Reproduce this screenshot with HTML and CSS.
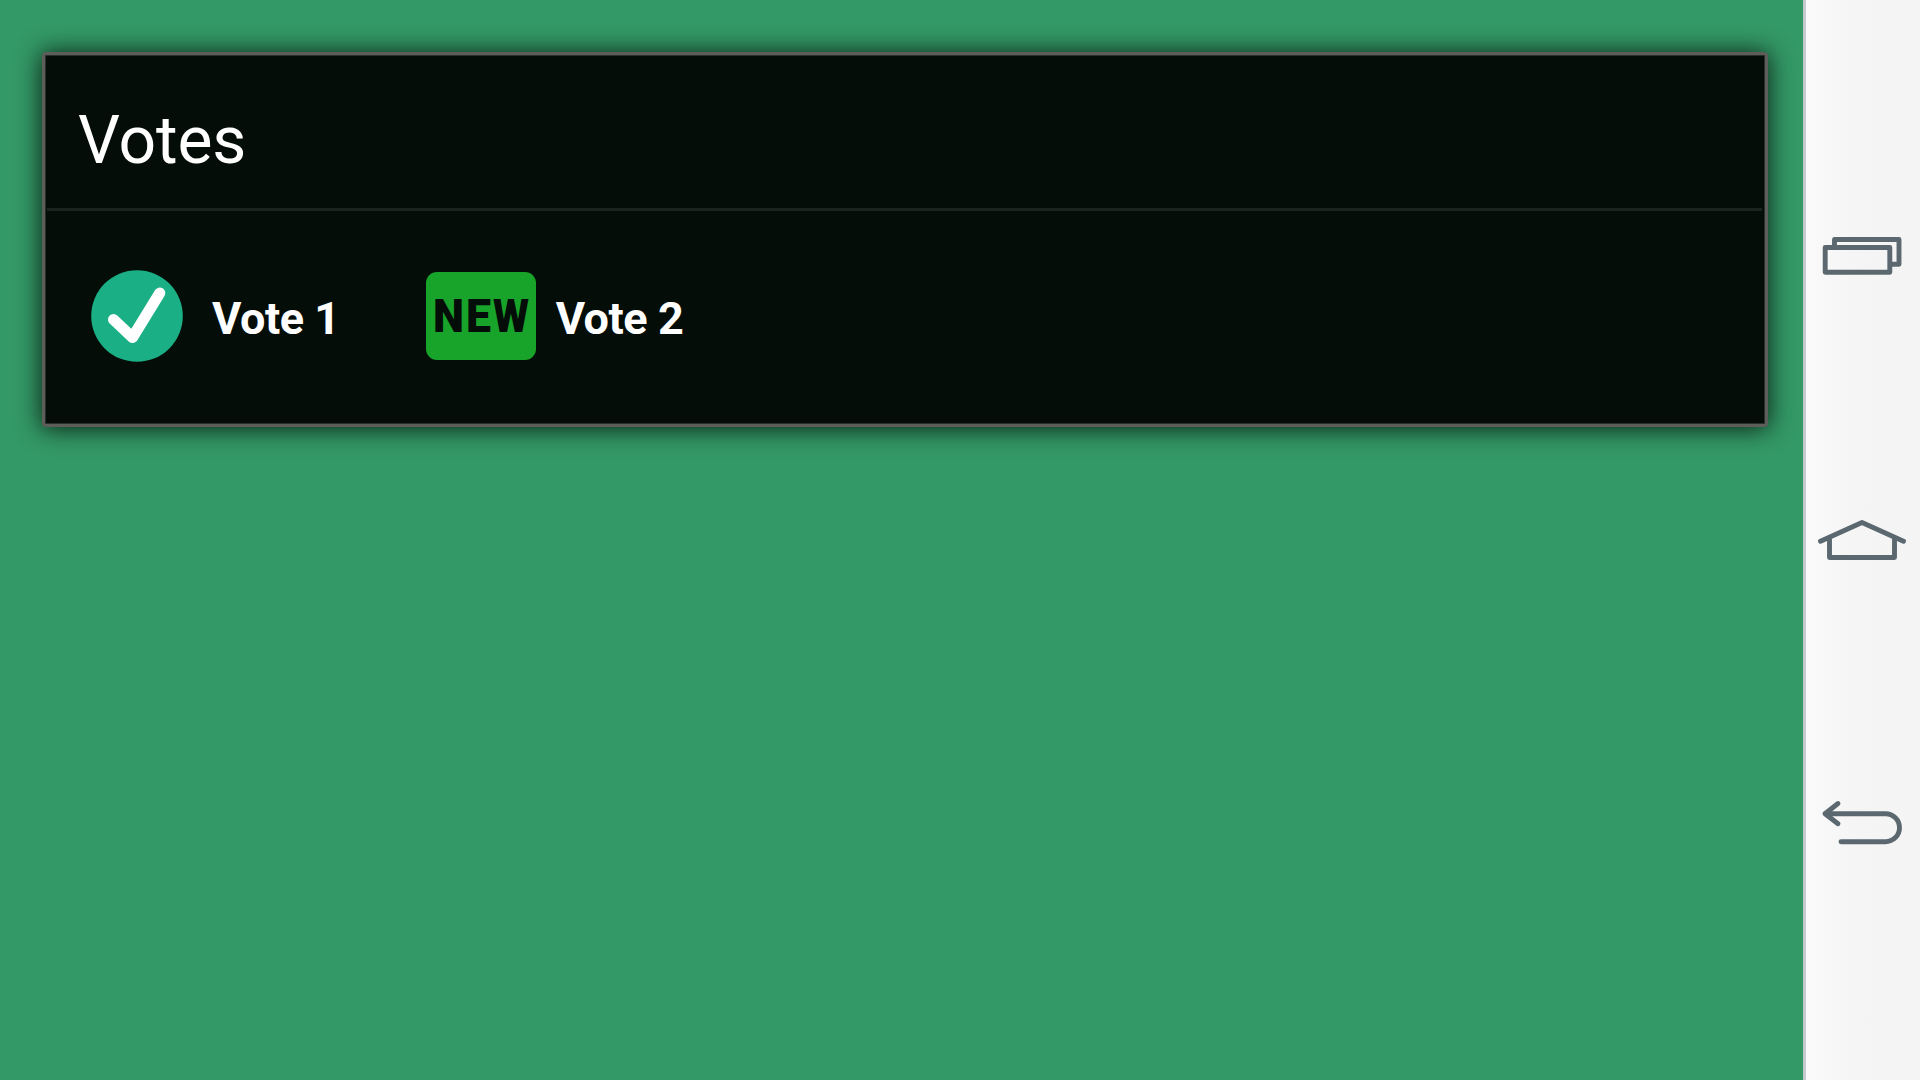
FILE: index.html
```
<!DOCTYPE html>
<html lang="en">
<head>
<meta charset="utf-8">
<title>Votes</title>
<link rel="stylesheet" href="styles.css">
</head>
<body>
<main class="screen">
  <section class="panel">
    <h1 class="panel-title"><span>Votes</span></h1>
    <div class="votes">
      <div class="vote">
        <svg class="check-icon" width="92" height="92" viewBox="0 0 92 92">
          <circle cx="46" cy="46" r="45.8" fill="#1aaf85"/>
          <path d="M22.5 49.5 41.5 67.5 68.8 23" fill="none" stroke="#fff" stroke-width="11" stroke-linecap="round" stroke-linejoin="round"/>
        </svg>
        <span class="vote-label">Vote 1</span>
      </div>
      <div class="vote">
        <svg class="new-icon" width="110" height="88" viewBox="0 0 110 88">
          <rect width="110" height="88" rx="11" fill="#18a32a"/>
          <g class="new-text">
            <text x="7" y="60" textLength="31" lengthAdjust="spacingAndGlyphs">N</text>
            <text x="40" y="60" textLength="25" lengthAdjust="spacingAndGlyphs">E</text>
            <text x="67" y="60" textLength="36" lengthAdjust="spacingAndGlyphs">W</text>
          </g>
        </svg>
        <span class="vote-label">Vote 2</span>
      </div>
    </div>
  </section>
</main>
<nav class="navbar">
  <svg width="96" height="70" viewBox="0 0 96 70">
    <path d="M11.5 26V19.5H76V44.3H67M2.2 27.5H66.8V52.3H2.2Z"/>
  </svg>
  <svg width="96" height="70" viewBox="0 0 96 70">
    <path d="M-2.5 36.3 39 17.5 80.5 36.3M6.5 33V52.5H71.5V33"/>
  </svg>
  <svg width="96" height="70" viewBox="0 0 96 70">
    <path d="M15 13.5 2 23.7 15 33.7M2 23.7H62.5A14 14 0 0 1 62.5 51.7H18"/>
  </svg>
</nav>
</body>
</html>
```
FILE: styles.css
```
* {
  box-sizing: border-box;
}

body {
  margin: 0;
  display: flex;
  width: 1920px;
  height: 1080px;
  overflow: hidden;
  background: #339966;
  color: #fff;
  font-family: Roboto, sans-serif;
}

.screen {
  width: 1803px;
  padding: 52px 35px 0 42px;
}

.panel {
  height: 375px;
  border: 3px solid #5d5d5a;
  border-radius: 4px;
  background: #040d08;
  box-shadow: 0 1px 24px 1px rgba(0, 0, 0, 0.78), inset 0 0 0 1px #292f2c;
}

.panel-title {
  display: flex;
  align-items: center;
  height: 156px;
  margin: 0 3px 0 2px;
  padding: 19px 0 0 31px;
  border-bottom: 3px solid #1b231f;
  font-size: 66px;
  font-weight: 400;
  line-height: 78px;
  letter-spacing: -0.1px;
}

.votes {
  display: flex;
  align-items: center;
  gap: 86px;
  height: 210px;
  padding-left: 46px;
}

.vote {
  display: flex;
  align-items: center;
}

.check-icon {
  margin-right: 29px;
}

.new-icon {
  margin-right: 20px;
}

.new-text {
  fill: #040d08;
  font-family: Roboto, sans-serif;
  font-size: 46px;
  font-weight: 900;
}

.vote-label {
  padding-top: 5px;
  font-size: 45px;
  font-weight: 700;
  line-height: 53px;
  letter-spacing: -0.45px;
}

.navbar {
  display: flex;
  flex-direction: column;
  width: 117px;
  gap: 215px;
  padding: 220px 0 0 17px;
  border-left: 3px solid #c5cad0;
  background: linear-gradient(90deg, #fafafa, #f5f5f5 50px, #f4f4f4);
}

.navbar svg {
  flex: none;
  overflow: visible;
  fill: none;
  stroke: #5c6870;
  stroke-width: 4.9;
  stroke-linecap: round;
  stroke-linejoin: round;
}
```
